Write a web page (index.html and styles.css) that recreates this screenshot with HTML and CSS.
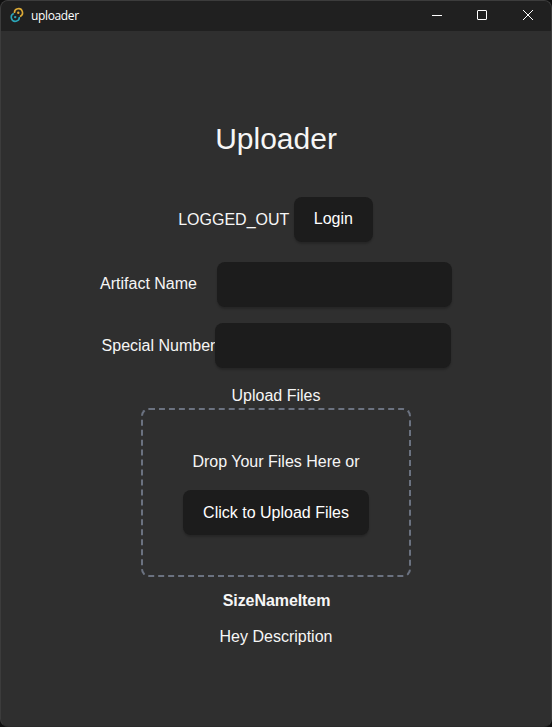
FILE: index.html
```html
<!DOCTYPE html>
<html lang="en">
<head>
<meta charset="utf-8">
<title>uploader</title>
<link rel="stylesheet" href="styles.css">
</head>
<body>
<div class="window">
  <header class="titlebar">
    <svg class="logo" width="14" height="16" viewBox="0 0 14 16" fill="none" stroke-width="1.6">
      <path d="M4.5 6.1A4 4 0 1 1 10 9.4" stroke="#dba936"/>
      <path d="M9.3 9.9A4 4 0 1 1 3.8 6.6" stroke="#2ba6b8"/>
      <circle cx="8.3" cy="5.8" r="1.2" fill="#dba936"/>
      <circle cx="5.2" cy="10.1" r="1.2" fill="#2ba6b8"/>
    </svg>
    <span class="caption">uploader</span>
    <div class="controls">
      <svg width="46" height="30" viewBox="0 0 46 30"><path d="M18 14.5h10"/></svg>
      <svg width="46" height="30" viewBox="0 0 46 30"><rect x="17.5" y="9.5" width="9" height="9" rx=".5"/></svg>
      <svg width="46" height="30" viewBox="0 0 46 30"><path d="M17 9l10 10M27 9l-10 10"/></svg>
    </div>
  </header>
  <main class="content">
    <h1>Uploader</h1>
    <div class="login"><span>LOGGED_OUT</span><button>Login</button></div>
    <div class="field artifact"><label for="artifact">Artifact Name</label><input id="artifact"></div>
    <div class="field special"><label for="special">Special Number</label><input id="special"></div>
    <div class="upload-label">Upload Files</div>
    <section class="dropzone">
      <p>Drop Your Files Here or</p>
      <button>Click to Upload Files</button>
    </section>
    <div class="columns">SizeNameItem</div>
    <p class="description">Hey Description</p>
  </main>
</div>
</body>
</html>
```
FILE: styles.css
```css
* { box-sizing: border-box; }
body { margin: 0; background: #101010; }
.window {
  height: 727px;
  border: 1px solid #3c3c3c;
  border-bottom-color: #2a2a2a;
  border-radius: 8px;
  background: #2f2f2f;
  overflow: hidden;
  color: #f6f6f6;
  font: 16px/24px "Liberation Sans", Arial, sans-serif;
}
.titlebar {
  height: 30px;
  display: flex;
  align-items: center;
  padding-left: 9px;
  background: #202020;
}
.logo { flex: none; margin-top: -2px; }
.caption {
  margin-left: 7px;
  color: #fff;
  font: 12px/16px "Open Sans", "Noto Sans", sans-serif;
  letter-spacing: -.35px;
}
.controls { display: flex; margin-left: auto; margin-right: -1px; }
.controls svg { fill: none; stroke: #fff; stroke-width: 1; }
.content {
  display: flex;
  flex-direction: column;
  align-items: center;
}
h1 {
  margin: 90px 0 0;
  font-size: 30px;
  font-weight: 400;
  line-height: 36px;
}
.login {
  display: flex;
  align-items: center;
  gap: 4.5px;
  margin-top: 40px;
  padding-right: 1px;
}
button, input {
  height: 45px;
  border: 0;
  border-radius: 8px;
  background: #1c1c1c;
  box-shadow: 0 2px 2px rgba(0, 0, 0, .2);
  color: #fff;
  font: inherit;
}
button { padding: 0 19.5px 1px; }
.login button { width: 79px; }
input { width: 235px; padding: 0 19px; }
.field { display: flex; align-items: center; }
.artifact { gap: 20px; margin-top: 20px; }
.artifact label { padding-bottom: 2px; }
.special { margin-top: 16px; padding-left: 1px; }
.special input { width: 236px; }
.upload-label { margin-top: 16px; }
.dropzone {
  width: 270px;
  height: 169px;
  border: 2px dashed #6b7280;
  border-radius: 8px;
  padding-top: 40px;
  text-align: center;
}
.dropzone p { margin: 0 0 16px; }
.dropzone button { width: 186px; padding: 1px 0 0; }
.columns { margin-top: 12px; padding-left: 1px; font-weight: 700; letter-spacing: -.07px; }
.description { margin: 12px 0 0; }
```
